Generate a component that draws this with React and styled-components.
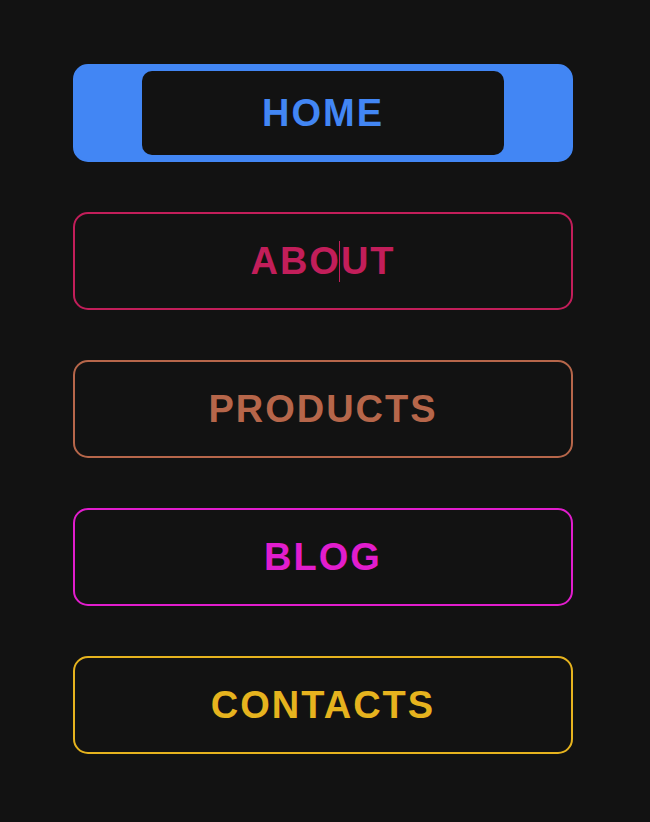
import React from "react";
import styled, { createGlobalStyle, css } from "styled-components";

const GlobalStyle = createGlobalStyle`
  html, body {
    margin: 0;
    padding: 0;
    background: #121212;
  }
  body {
    font-family: "Liberation Sans", Arial, sans-serif;
  }
`;

const Menu = styled.nav`
  display: flex;
  flex-direction: column;
  gap: 50px;
  padding: 64px 0 0 73px;
`;

const Item = styled.a`
  box-sizing: border-box;
  width: 500px;
  height: 98px;
  display: flex;
  align-items: center;
  justify-content: center;
  border: 2px solid ${({ color }) => color};
  border-radius: 15px;
  color: ${({ color }) => color};
  font-size: 38px;
  font-weight: 700;
  letter-spacing: 2px;
  text-decoration: none;
  cursor: pointer;
  ${({ active, color }) =>
    active &&
    css`
      background: ${color};
      padding: 5px 67px;
    `}
`;

const Inner = styled.span`
  flex: 1;
  align-self: stretch;
  display: flex;
  align-items: center;
  justify-content: center;
  background: #121212;
  border-radius: 10px;
`;

const Caret = styled.span`
  display: inline-block;
  width: 1px;
  height: 41px;
  margin: 0 -0.5px 0 -2px;
  padding-right: 1.5px;
  background: ${({ color }) => color};
  background-clip: content-box;
  vertical-align: -8px;
`;

const links = [
  { label: "HOME", color: "#4286f4", active: true },
  { label: "ABOUT", color: "#c21e5a", caret: 3 },
  { label: "PRODUCTS", color: "#b6664a" },
  { label: "BLOG", color: "#e11dcd" },
  { label: "CONTACTS", color: "#e6b31e" },
];

const App = () => {
  return (
    <>
      <GlobalStyle />
      <Menu>
        {links.map((l) => (
          <Item key={l.label} color={l.color} active={l.active}>
            {l.active ? (
              <Inner>{l.label}</Inner>
            ) : l.caret ? (
              <span>
                {l.label.slice(0, l.caret)}
                <Caret color={l.color} />
                {l.label.slice(l.caret)}
              </span>
            ) : (
              l.label
            )}
          </Item>
        ))}
      </Menu>
    </>
  );
};

export default App;
